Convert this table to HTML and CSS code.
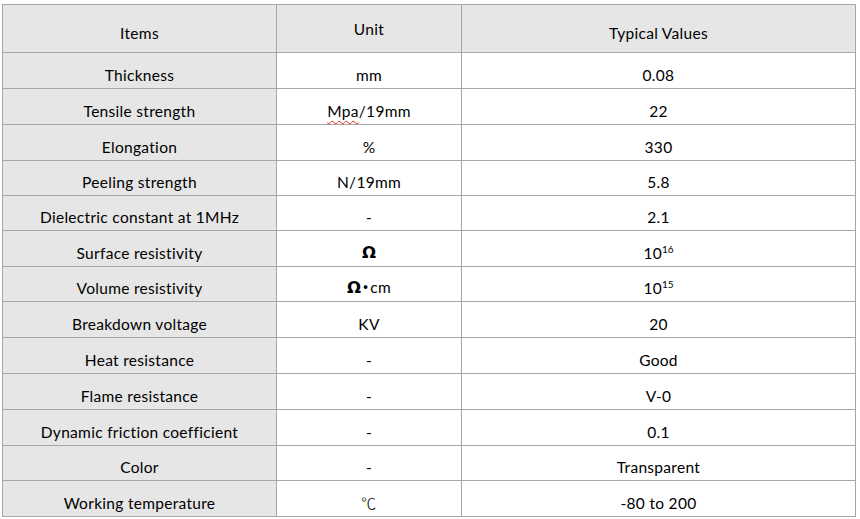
FILE: index.html
```html
<!DOCTYPE html>
<html>
<head>
<meta charset="utf-8">
<link rel="stylesheet" href="styles.css">
</head>
<body>
<div class="table">
  <div class="row head">
    <div class="cell key"><span>Items</span></div>
    <div class="cell unit-head"><span>Unit</span></div>
    <div class="cell"><span>Typical Values</span></div>
  </div>
  <div class="row r35">
    <div class="cell key"><span>Thickness</span></div>
    <div class="cell"><span>mm</span></div>
    <div class="cell"><span>0.08</span></div>
  </div>
  <div class="row r35">
    <div class="cell key"><span>Tensile strength</span></div>
    <div class="cell"><span><span class="spell">Mpa</span>/19mm</span></div>
    <div class="cell"><span>22</span></div>
  </div>
  <div class="row r35">
    <div class="cell key"><span>Elongation</span></div>
    <div class="cell"><span>%</span></div>
    <div class="cell"><span>330</span></div>
  </div>
  <div class="row r34">
    <div class="cell key"><span>Peeling strength</span></div>
    <div class="cell"><span>N/19mm</span></div>
    <div class="cell"><span>5.8</span></div>
  </div>
  <div class="row r34">
    <div class="cell key"><span>Dielectric constant at 1MHz</span></div>
    <div class="cell"><span>-</span></div>
    <div class="cell"><span>2.1</span></div>
  </div>
  <div class="row r35">
    <div class="cell key"><span>Surface resistivity</span></div>
    <div class="cell"><span class="ohm">Ω</span></div>
    <div class="cell"><span>10<sup>16</sup></span></div>
  </div>
  <div class="row r34">
    <div class="cell key"><span>Volume resistivity</span></div>
    <div class="cell"><span><span class="ohm">Ω</span><span class="dot">·</span>cm</span></div>
    <div class="cell"><span>10<sup>15</sup></span></div>
  </div>
  <div class="row r35">
    <div class="cell key"><span>Breakdown voltage</span></div>
    <div class="cell"><span>KV</span></div>
    <div class="cell"><span>20</span></div>
  </div>
  <div class="row r35">
    <div class="cell key"><span>Heat resistance</span></div>
    <div class="cell"><span>-</span></div>
    <div class="cell"><span>Good</span></div>
  </div>
  <div class="row r35">
    <div class="cell key"><span>Flame resistance</span></div>
    <div class="cell"><span>-</span></div>
    <div class="cell"><span>V-0</span></div>
  </div>
  <div class="row r35">
    <div class="cell key"><span>Dynamic friction coefficient</span></div>
    <div class="cell"><span>-</span></div>
    <div class="cell"><span>0.1</span></div>
  </div>
  <div class="row r34">
    <div class="cell key"><span>Color</span></div>
    <div class="cell"><span>-</span></div>
    <div class="cell"><span>Transparent</span></div>
  </div>
  <div class="row r35">
    <div class="cell key"><span>Working temperature</span></div>
    <div class="cell"><span class="deg">℃</span></div>
    <div class="cell"><span>-80 to 200</span></div>
  </div>
</div>
</body>
</html>
```
FILE: styles.css
```css
html, body {
  margin: 0;
  padding: 0;
  background: #ffffff;
}
body {
  padding: 4px 0 0 2px;
  font-family: "Lato", "Liberation Sans", sans-serif;
  font-size: 15.5px;
  letter-spacing: 0.3px;
  color: #000;
}
.table {
  width: 854px;
  box-sizing: border-box;
  display: grid;
  grid-template-columns: 273px 184px 393px;
  gap: 1px;
  padding: 1px;
  background: #a6a6a6;
}
.row {
  display: contents;
}
.cell {
  background: #ffffff;
  display: flex;
  align-items: flex-end;
  justify-content: center;
  line-height: 18px;
  padding-bottom: 4px;
  box-sizing: border-box;
  white-space: nowrap;
}
.key {
  background: #e6e6e6;
}
.head .cell {
  background: #e6e6e6;
  height: 47px;
  padding-bottom: 10px;
}
.head .unit-head {
  padding-bottom: 14px;
}
.r35 .cell { height: 35px; }
.r34 .cell { height: 34px; }
sup {
  font-size: 10px;
  line-height: 0;
  vertical-align: 6px;
  letter-spacing: 0;
}
.spell {
  text-decoration: underline wavy #e0241b;
  text-decoration-thickness: 1px;
  text-underline-offset: 3px;
}
.ohm {
  font-family: "DejaVu Sans", sans-serif;
  font-weight: 700;
  font-size: 16.5px;
  letter-spacing: 0;
}
.dot {
  font-weight: 900;
  font-size: 18px;
  margin: 0 2px 0 2px;
}
.deg {
  font-family: "Noto Sans CJK SC", sans-serif;
  font-weight: 300;
  font-size: 15px;
}
```
